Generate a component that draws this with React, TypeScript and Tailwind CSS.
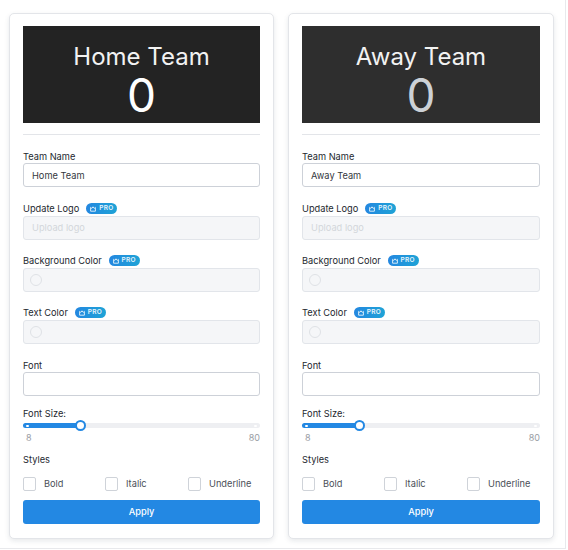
const font = { fontFamily: "Inter, sans-serif" };

function ProBadge() {
  return (
    <span className="flex h-[11px] w-[31px] items-center justify-center gap-[3px] rounded-full bg-gradient-to-r from-[#2487e0] to-[#1fa3d6] text-[6.5px] font-semibold leading-none tracking-[0.3px] text-[#e6f4fb]">
      <svg width="6" height="6" viewBox="0 0 6 6" fill="none" stroke="#e6f4fb" strokeWidth="0.9">
        <path d="M0.6 1.4 L1.8 2.4 L3 0.8 L4.2 2.4 L5.4 1.4 V5.2 H0.6 Z" />
      </svg>
      PRO
    </span>
  );
}

function Label({ children, pro }: { children: string; pro?: boolean }) {
  return (
    <div className="flex h-[13px] items-center gap-[7px] text-[9.25px] leading-[13px] text-[#23272e]">
      <span>{children}</span>
      {pro && <ProBadge />}
    </div>
  );
}

function DisabledColor() {
  return (
    <div className="mt-[1px] flex h-[24px] items-center rounded-[3px] border border-[#e2e5ea] bg-[#f5f6f8] pl-[6px]">
      <span className="h-[12px] w-[12px] rounded-full border border-[#dfe2e6] bg-[#f5f6f8]" />
    </div>
  );
}

function Check({ label, className }: { label: string; className: string }) {
  return (
    <div className={`flex items-center ${className}`}>
      <span className="h-[14px] w-[13px] rounded-[2px] border border-[#cfd3d9] bg-white" />
      <span className="ml-[8px] text-[9.25px] text-[#4a4f57]">{label}</span>
    </div>
  );
}

function TeamCard({ name, boardBg, scoreColor, width }: { name: string; boardBg: string; scoreColor: string; width: string }) {
  return (
    <div className={`h-[526px] rounded-[5px] border border-[#e3e5e9] bg-white px-[13px] pt-[12px] shadow-[0_2px_5px_rgba(60,70,90,0.12)] ${width}`}>
      <div className={`flex h-[97px] flex-col items-center pt-[15px] ${boardBg}`}>
        <div className="text-[24px] leading-[32px] text-[#f2f2f2]">{name}</div>
        <div className={`mt-[-1px] text-[46px] leading-[46px] ${scoreColor}`}>0</div>
      </div>
      <div className="mt-[11px] h-px bg-[#e3e5e9]" />

      <div className="mt-[15px]">
        <Label>Team Name</Label>
        <div className="flex h-[24px] items-center rounded-[3px] border border-[#cdd1d8] px-[8px] pt-[1px] text-[9.25px] text-[#33373d]">
          {name}
        </div>
      </div>

      <div className="mt-[15px]">
        <Label pro>Update Logo</Label>
        <div className="mt-[1px] flex h-[24px] items-center rounded-[3px] border border-[#e2e5ea] bg-[#f5f6f8] px-[8px] text-[9.25px] text-[#d3d6db]">
          Upload logo
        </div>
      </div>

      <div className="mt-[14px]">
        <Label pro>Background Color</Label>
        <DisabledColor />
      </div>

      <div className="mt-[14px]">
        <Label pro>Text Color</Label>
        <DisabledColor />
      </div>

      <div className="mt-[15px]">
        <Label>Font</Label>
        <div className="h-[24px] rounded-[3px] border border-[#cdd1d8]" />
      </div>

      <div className="mt-[11px]">
        <Label>Font Size:</Label>
        <div className="relative mt-[3px] h-[5px] rounded-full bg-[#eeeff2]">
          <div className="h-[5px] w-[57px] rounded-full bg-[#2388e3]" />
          <span className="absolute left-[3px] top-[1.5px] h-[2px] w-[3px] rounded-full bg-white" />
          <span className="absolute right-[3px] top-[1.5px] h-[2px] w-[3px] rounded-full bg-white" />
          <span className="absolute left-[52px] top-[-3px] h-[11px] w-[11px] rounded-full border-2 border-[#2388e3] bg-white" />
        </div>
        <div className="mt-[3px] flex justify-between pl-[3px] text-[9px] leading-[13px] text-[#9a9ea5]">
          <span>8</span>
          <span>80</span>
        </div>
      </div>

      <div className="mt-[9px]">
        <Label>Styles</Label>
        <div className="mt-[11px] flex h-[14px]">
          <Check label="Bold" className="w-[82px]" />
          <Check label="Italic" className="w-[83px]" />
          <Check label="Underline" className="" />
        </div>
      </div>

      <div className="mt-[9px] flex h-[24px] items-center justify-center rounded-[3px] bg-[#2388e3] text-[9.25px] font-medium text-white">
        Apply
      </div>
    </div>
  );
}

export default function App() {
  return (
    <div className="h-[550px] w-[568px] overflow-hidden bg-white" style={font}>
      <div className="h-[549px] w-[566px] border-b border-r border-[#e8e9ec] pl-[9px] pt-[13px]">
        <div className="flex gap-[14px]">
          <TeamCard name="Home Team" boardBg="bg-[#232323]" scoreColor="text-white" width="w-[265px]" />
          <TeamCard name="Away Team" boardBg="bg-[#2e2e2e]" scoreColor="text-[#ccd1d6]" width="w-[266px]" />
        </div>
      </div>
    </div>
  );
}
